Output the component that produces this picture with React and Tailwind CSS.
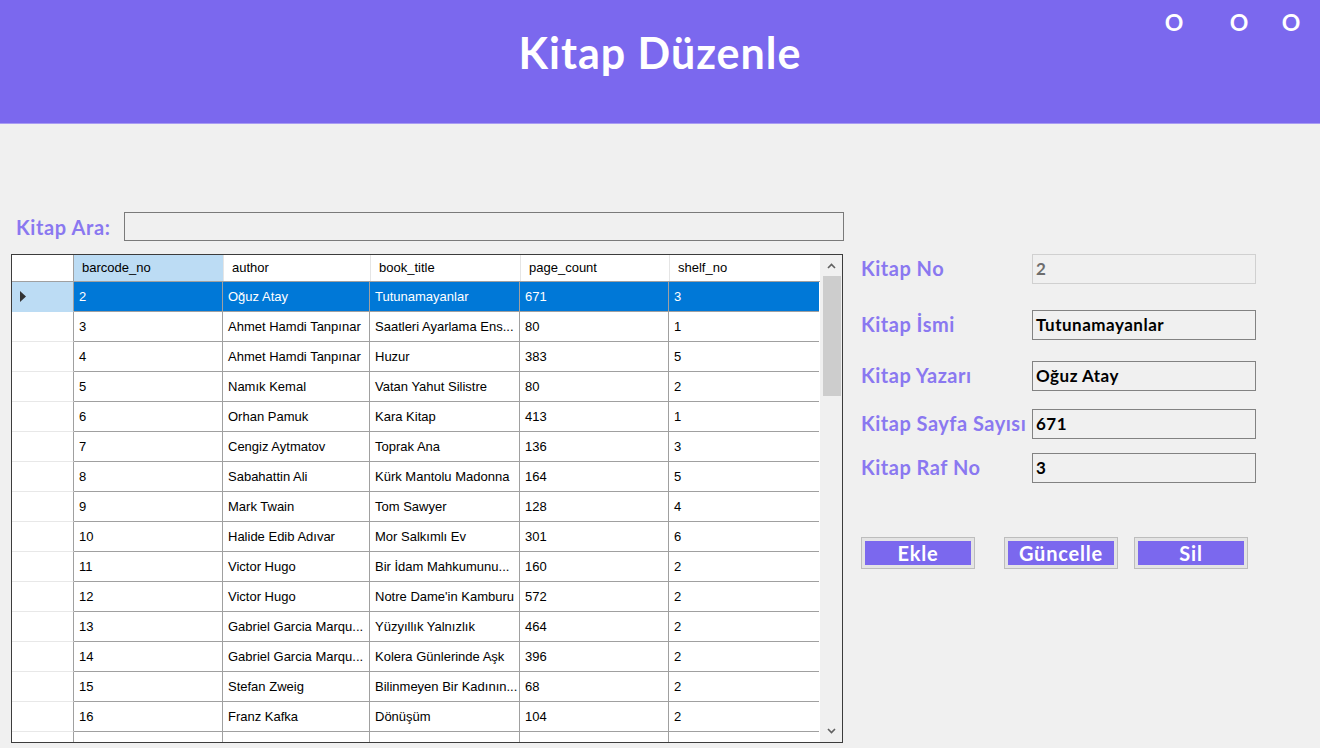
import React from "react";

const rows = [
  ["2", "Oğuz Atay", "Tutunamayanlar", "671", "3"],
  ["3", "Ahmet Hamdi Tanpınar", "Saatleri Ayarlama Ens...", "80", "1"],
  ["4", "Ahmet Hamdi Tanpınar", "Huzur", "383", "5"],
  ["5", "Namık Kemal", "Vatan Yahut Silistre", "80", "2"],
  ["6", "Orhan Pamuk", "Kara Kitap", "413", "1"],
  ["7", "Cengiz Aytmatov", "Toprak Ana", "136", "3"],
  ["8", "Sabahattin Ali", "Kürk Mantolu Madonna", "164", "5"],
  ["9", "Mark Twain", "Tom Sawyer", "128", "4"],
  ["10", "Halide Edib Adıvar", "Mor Salkımlı Ev", "301", "6"],
  ["11", "Victor Hugo", "Bir İdam Mahkumunu...", "160", "2"],
  ["12", "Victor Hugo", "Notre Dame'in Kamburu", "572", "2"],
  ["13", "Gabriel Garcia Marqu...", "Yüzyıllık Yalnızlık", "464", "2"],
  ["14", "Gabriel Garcia Marqu...", "Kolera Günlerinde Aşk", "396", "2"],
  ["15", "Stefan Zweig", "Bilinmeyen Bir Kadının...", "68", "2"],
  ["16", "Franz Kafka", "Dönüşüm", "104", "2"],
  ["17", "Ece Temelkuran", "Akıl Almaz", "63", "1"],
];

const colW = ["w-[149px]", "w-[147px]", "w-[150px]", "w-[149px]", "w-[150px]"];
const headers = ["barcode_no", "author", "book_title", "page_count", "shelf_no"];

const ui = { fontFamily: "Lato, 'Noto Sans', sans-serif" };
const grid = { fontFamily: "'Liberation Sans', Arial, sans-serif" };

function Field({ label, value, disabled, mt }) {
  return (
    <div className={`flex items-center ${mt}`}>
      <div className="w-[171px] text-[20px] font-bold text-[#8a78f0] leading-none tracking-[0.5px] -mt-[3px] whitespace-nowrap">
        {label}
      </div>
      <div
        className={`w-[224px] h-[30px] flex items-center pl-[3px] text-[17px] font-bold tracking-[0.5px] ${
          disabled ? "border border-[#d0d0d0] text-[#6d6d6d]" : "border border-[#828282] text-black"
        } bg-[#F0F0F0]`}
      >
        {value}
      </div>
    </div>
  );
}

function Btn({ children, w }) {
  return (
    <div className={`${w} h-[32px] border border-[#bdbdbd] bg-[#e4e4e4] p-[3px]`}>
      <div className="w-full h-full bg-[#7B68EE] text-white text-[20px] font-bold tracking-[0.8px] flex items-center justify-center leading-none">
        {children}
      </div>
    </div>
  );
}

export default function App() {
  return (
    <div className="w-[1320px] h-[748px] bg-[#F0F0F0] overflow-hidden" style={ui}>
      <div className="relative h-[124px] bg-[#7B68EE] border-b border-[#a99cf3] flex justify-center pt-[31px]">
        <div className="text-white text-[43px] font-bold leading-none tracking-[1px]">Kitap Düzenle</div>
        <div className="absolute top-[11px] right-[17px] flex text-white text-[23px] font-bold leading-none">
          <span className="w-[24px] text-center mr-[41px]">O</span>
          <span className="w-[24px] text-center mr-[28px]">O</span>
          <span className="w-[24px] text-center">O</span>
        </div>
      </div>

      <div className="flex">
        <div className="pl-[11px] pt-[88px]">
          <div className="flex items-center h-[29px]">
            <div className="w-[113px] pl-[5px] text-[20px] font-bold text-[#8a78f0] tracking-[0.6px] leading-none">Kitap Ara:</div>
            <div className="w-[720px] h-[29px] border border-[#7a7a7a] bg-[#F0F0F0]" />
          </div>

          <div className="mt-[13px] w-[832px] h-[489px] border border-[#3c3c3c] bg-white flex overflow-hidden" style={grid}>
            <div className="w-[808px] h-full overflow-hidden">
              <div className="flex h-[27px] border-b border-[#a0a0a0] text-[13px] text-black">
                <div className="w-[62px] border-r border-[#a0a0a0] bg-white" />
                {headers.map((h, i) => (
                  <div
                    key={h}
                    className={`${colW[i]} flex items-center pl-[8px] ${
                      i === 0 ? "bg-[#BCDCF4]" : "bg-white border-l border-[#e5e5e5]"
                    }`}
                  >
                    {h}
                  </div>
                ))}
              </div>
              {rows.map((r, ri) => {
                const sel = ri === 0;
                return (
                  <div key={ri} className="flex h-[30px] text-[13px]">
                    <div
                      className={`w-[62px] border-r border-[#a0a0a0] border-b ${
                        sel ? "bg-[#BCDCF4] border-b-[#BCDCF4]" : "bg-white border-b-[#e8e8e8]"
                      } flex items-center pl-[8px]`}
                    >
                      {sel && (
                        <svg width="7" height="11" viewBox="0 0 7 11">
                          <path d="M0 0 L6 5.5 L0 11 Z" fill="#333" />
                        </svg>
                      )}
                    </div>
                    {r.map((c, ci) => (
                      <div
                        key={ci}
                        className={`${colW[ci]} ${ci < 4 ? "border-r" : ""} border-b border-[#a0a0a0] flex items-center pl-[5px] whitespace-nowrap overflow-hidden ${
                          sel ? "bg-[#0078D7] text-white" : "bg-white text-black"
                        }`}
                      >
                        {c}
                      </div>
                    ))}
                  </div>
                );
              })}
            </div>
            <div className="w-[22px] h-full bg-[#F0F0F0] flex flex-col items-center border-l border-[#f0f0f0]">
              <div className="h-[21px] flex items-center justify-center">
                <svg width="9" height="6" viewBox="0 0 9 6">
                  <path d="M1 5 L4.5 1.5 L8 5" stroke="#606060" strokeWidth="1.6" fill="none" />
                </svg>
              </div>
              <div className="w-[18px] h-[120px] bg-[#CDCDCD]" />
              <div className="flex-1" />
              <div className="h-[22px] flex items-center justify-center">
                <svg width="9" height="6" viewBox="0 0 9 6">
                  <path d="M1 1 L4.5 4.5 L8 1" stroke="#606060" strokeWidth="1.6" fill="none" />
                </svg>
              </div>
            </div>
          </div>
        </div>

        <div className="pl-[17px] pt-[130px]">
          <Field label="Kitap No" value="2" disabled mt="" />
          <Field label="Kitap İsmi" value="Tutunamayanlar" mt="mt-[26px]" />
          <Field label="Kitap Yazarı" value="Oğuz Atay" mt="mt-[21px]" />
          <Field label="Kitap Sayfa Sayısı" value="671" mt="mt-[18px]" />
          <Field label="Kitap Raf No" value="3" mt="mt-[14px]" />
          <div className="flex mt-[54px]">
            <Btn w="w-[114px]">Ekle</Btn>
            <div className="ml-[29px]">
              <Btn w="w-[114px]">Güncelle</Btn>
            </div>
            <div className="ml-[16px]">
              <Btn w="w-[114px]">Sil</Btn>
            </div>
          </div>
        </div>
      </div>
    </div>
  );
}
